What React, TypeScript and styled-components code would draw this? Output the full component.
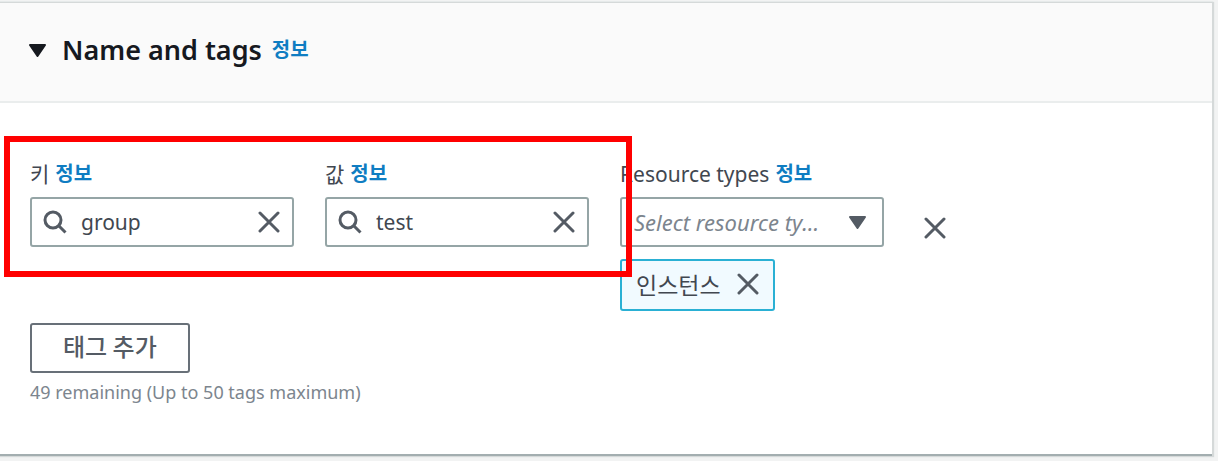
import React, { useState } from "react";
import styled, { createGlobalStyle } from "styled-components";

const GlobalStyle = createGlobalStyle`
  *, *::before, *::after { box-sizing: border-box; }
  body {
    margin: 0;
    background: #f2f3f3;
    color: #16191f;
    font-family: "Noto Sans", "Noto Sans CJK KR", sans-serif;
    font-size: 21px;
    line-height: 26px;
  }
  button, input, select { font: inherit; color: inherit; margin: 0; }
`;

const Page = styled.main`
  padding: 3px 6px 5px 0;
`;

const Panel = styled.section`
  background: #ffffff;
  border-bottom: 2px solid #a3aeb0;
  box-shadow: 1px 0 1px 1px #d5d9d9, 0 -1px 0 1px #eaeded;
`;

const PanelHeader = styled.header`
  display: flex;
  align-items: center;
  gap: 10px;
  height: 100px;
  padding: 0 30px 4px 29px;
  background: #fafafa;
  border-bottom: 2px solid #eaeded;
`;

const Toggle = styled.button`
  display: flex;
  align-items: center;
  gap: 16px;
  padding: 0;
  border: 0;
  background: none;
  cursor: pointer;
`;

const Title = styled.h2`
  margin: 0;
  font-size: 27px;
  line-height: 34px;
  font-weight: 600;
`;

const InfoLink = styled.a`
  color: #0f7dc2;
  font-size: 20px;
  font-weight: 600;
  text-decoration: none;
`;

const PanelBody = styled.div`
  padding: 58px 30px 49px;
`;

const TagRow = styled.div`
  position: relative;
  display: grid;
  grid-template-columns: repeat(3, minmax(0, 264px)) auto;
  justify-content: start;
  column-gap: 31px;
`;

const Highlight = styled.div`
  position: absolute;
  top: -25px;
  left: -26px;
  width: 628px;
  height: 141px;
  border: 6px solid #ff0000;
  pointer-events: none;
`;

const Field = styled.div`
  display: flex;
  flex-direction: column;
`;

const LabelLine = styled.div`
  display: flex;
  align-items: center;
  gap: 6px;
  height: 26px;
  margin-bottom: 10px;
  color: #414750;
  white-space: nowrap;
`;

const Control = styled.div<{ $select?: boolean }>`
  display: flex;
  align-items: center;
  gap: ${(p) => (p.$select ? "18px" : "14px")};
  height: 50px;
  padding: ${(p) => (p.$select ? "0 16px 0 12px" : "0 12px 0 11px")};
  background: #ffffff;
  border: 2px solid #95a5a6;
  border-radius: 3px;
  color: #545b64;
`;

const TextInput = styled.input`
  flex: 1;
  min-width: 0;
  padding: 0;
  border: 0;
  outline: 0;
  background: none;
  color: #414750;
`;

const SelectInput = styled.select`
  flex: 1;
  min-width: 0;
  height: 34px;
  padding: 0;
  border: 0;
  outline: 0;
  appearance: none;
  background: none;
  color: #7c858e;
  font-size: 22px;
  line-height: 34px;
  font-style: italic;
  text-overflow: ellipsis;
`;

const IconButton = styled.button`
  display: flex;
  padding: 0;
  border: 0;
  background: none;
  color: #545b64;
  cursor: pointer;
`;

const RemoveCell = styled.div`
  padding: 56px 0 0 9px;
`;

const Token = styled.div`
  display: flex;
  align-items: center;
  align-self: flex-start;
  gap: 16px;
  height: 52px;
  margin-top: 12px;
  padding: 0 14px 2px;
  background: #f1faff;
  border: 2px solid #2ab0d4;
  border-radius: 3px;
  color: #414750;
`;

const KoreanText = styled.span<{ $size: number }>`
  font-family: "Noto Sans CJK KR", sans-serif;
  font-size: ${(p) => p.$size}px;
`;

const AddButton = styled.button`
  display: block;
  height: 50px;
  margin-top: 12px;
  padding: 0 31px 2px;
  background: #ffffff;
  border: 2px solid #687078;
  border-radius: 3px;
  color: #545b64;
  font-weight: 500;
  cursor: pointer;
`;

const Hint = styled.p`
  margin: 6px 0 0;
  color: #7c858e;
  font-size: 18px;
`;

const Caret = () => (
  <svg width="17" height="13" viewBox="0 0 17 13" aria-hidden="true">
    <path d="M1 1H16L8.5 12Z" fill="currentColor" stroke="currentColor" strokeWidth="2" strokeLinejoin="round" />
  </svg>
);

const Cross = () => (
  <svg width="22" height="22" viewBox="0 0 22 22" aria-hidden="true">
    <path d="M2 2L20 20M20 2L2 20" stroke="currentColor" strokeWidth="3" strokeLinecap="round" />
  </svg>
);

const Magnifier = () => (
  <svg width="24" height="24" viewBox="0 0 24 24" fill="none" stroke="currentColor" strokeWidth="3" aria-hidden="true">
    <circle cx="10" cy="10" r="8" />
    <path d="M16 16L22.5 22.5" />
  </svg>
);

const Info = () => <InfoLink href="#info">정보</InfoLink>;

type SearchFieldProps = { id: string; label: string; initial: string };

const SearchField = ({ id, label, initial }: SearchFieldProps) => {
  const [value, setValue] = useState(initial);
  return (
    <Field>
      <LabelLine>
        <label htmlFor={id}>{label}</label>
        <Info />
      </LabelLine>
      <Control>
        <Magnifier />
        <TextInput id={id} value={value} onChange={(e) => setValue(e.target.value)} />
        <IconButton type="button" aria-label="Clear" onClick={() => setValue("")}>
          <Cross />
        </IconButton>
      </Control>
    </Field>
  );
};

export default function App() {
  const [open, setOpen] = useState(true);
  return (
    <Page>
      <GlobalStyle />
      <Panel>
        <PanelHeader>
          <Toggle type="button" aria-expanded={open} onClick={() => setOpen(!open)}>
            <Caret />
            <Title>Name and tags</Title>
          </Toggle>
          <Info />
        </PanelHeader>
        {open && (
          <PanelBody>
            <TagRow>
              <SearchField id="tag-key" label="키" initial="group" />
              <SearchField id="tag-value" label="값" initial="test" />
              <Field>
                <LabelLine>
                  <label htmlFor="resource-types">Resource types</label>
                  <Info />
                </LabelLine>
                <Control $select>
                  <SelectInput id="resource-types">
                    <option>Select resource types</option>
                  </SelectInput>
                  <Caret />
                </Control>
                <Token>
                  <KoreanText $size={23}>인스턴스</KoreanText>
                  <IconButton type="button" aria-label="Remove 인스턴스">
                    <Cross />
                  </IconButton>
                </Token>
              </Field>
              <RemoveCell>
                <IconButton type="button" aria-label="Remove tag">
                  <Cross />
                </IconButton>
              </RemoveCell>
              <Highlight />
            </TagRow>
            <AddButton type="button">
              <KoreanText $size={24}>태그 추가</KoreanText>
            </AddButton>
            <Hint>49 remaining (Up to 50 tags maximum)</Hint>
          </PanelBody>
        )}
      </Panel>
    </Page>
  );
}
